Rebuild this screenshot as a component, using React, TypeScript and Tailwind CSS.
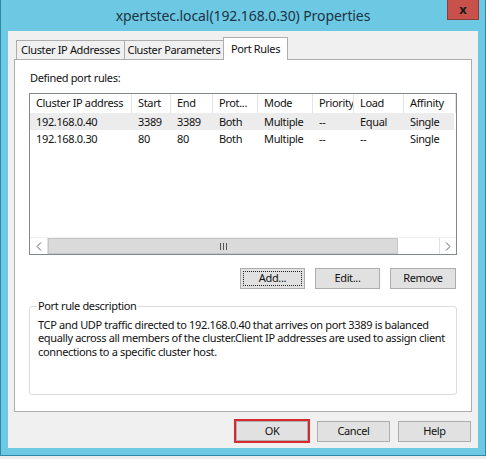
import React from "react";

// Column layout of the port rules list (widths in px)
const columns = [
  { label: "Cluster IP address", width: 102 },
  { label: "Start", width: 39 },
  { label: "End", width: 42 },
  { label: "Prot...", width: 45 },
  { label: "Mode", width: 55 },
  { label: "Priority", width: 41 },
  { label: "Load", width: 50 },
  { label: "Affinity", width: 52 },
];

const rules = [
  ["192.168.0.40", "3389", "3389", "Both", "Multiple", "--", "Equal", "Single"],
  ["192.168.0.30", "80", "80", "Both", "Multiple", "--", "--", "Single"],
];

const font = "font-['Noto_Sans',_'Segoe_UI',_sans-serif]";
const txt = "text-[11px] tracking-[-0.35px] text-[#111]";
const btnClass = `h-[21px] border border-[#adadad] bg-[#e1e1e1] ${txt} flex items-center justify-center`;

function Tab({ label, width, active }: { label: string; width: string; active?: boolean }) {
  if (active) {
    return (
      <div className={`relative z-10 -mb-px h-[23px] ${width} pt-[3px] text-center bg-white border border-b-0 border-[#adadad] ${txt}`}>
        {label}
      </div>
    );
  }
  return (
    <div className={`h-[19px] ${width} text-center bg-[#f0f0f0] border border-b-0 border-[#adadad] -mr-px leading-[18px] whitespace-nowrap ${txt}`}>
      {label}
    </div>
  );
}

function PortList() {
  return (
    <div className="ml-[14px] w-[428px] h-[162px] border border-[#828790] bg-white flex flex-col">
      {/* header */}
      <div className="flex h-[19px] shrink-0">
        {columns.map((c) => (
          <div
            key={c.label}
            style={{ width: c.width }}
            className={`shrink-0 border-r border-[#e5e5e5] pl-[6px] leading-[18px] whitespace-nowrap overflow-hidden ${txt}`}
          >
            {c.label}
          </div>
        ))}
      </div>
      {/* rows */}
      {rules.map((r, i) => (
        <div
          key={i}
          className={`flex h-[17px] w-[424px] shrink-0 ${i === 0 ? "bg-[#ececec]" : ""}`}
        >
          {r.map((cell, j) => (
            <div
              key={j}
              style={{ width: columns[j].width }}
              className={`shrink-0 pl-[6px] leading-[17px] whitespace-nowrap ${txt}`}
            >
              {cell}
            </div>
          ))}
        </div>
      ))}
      <div className="flex-1" />
      {/* horizontal scrollbar */}
      <div className="flex h-[17px] shrink-0 bg-white border-t border-[#f0f0f0]">
        <div className="w-[18px] flex items-center justify-center border-r border-[#e0e0e0]">
          <svg width="6" height="9" viewBox="0 0 6 9">
            <path d="M5 0.5 L1 4.5 L5 8.5" fill="none" stroke="#606060" strokeWidth="1" />
          </svg>
        </div>
        <div className="w-[350px] bg-[#dadada] border border-[#c6c6c6] flex items-center justify-center">
          <svg width="7" height="7" viewBox="0 0 7 7">
            <path d="M0.5 0 V7 M3.5 0 V7 M6.5 0 V7" stroke="#555" strokeWidth="1" />
          </svg>
        </div>
        <div className="flex-1" />
        <div className="w-[17px] flex items-center justify-center border-l border-[#e0e0e0]">
          <svg width="6" height="9" viewBox="0 0 6 9">
            <path d="M1 0.5 L5 4.5 L1 8.5" fill="none" stroke="#606060" strokeWidth="1" />
          </svg>
        </div>
      </div>
    </div>
  );
}

export default function App() {
  return (
    <div className={`w-[486px] h-[459px] bg-[#ededed] ${font}`}>
      <div className="h-[456px] bg-[#6cc8e3] border-x border-b border-[#2f88aa] flex flex-col">
        {/* Title bar */}
        <div className="relative h-[31px] shrink-0 flex items-center justify-center">
          <span className="text-[14px] tracking-[-0.1px] text-[#1d3444]">
            xpertstec.local(192.168.0.30) Properties
          </span>
          <div className="absolute top-0 right-[6px] w-[32px] h-[20px] bg-[#c8524b] border border-t-0 border-[#8e3a35] flex items-center justify-center">
            <span className="text-[13px] font-bold text-[#1a1a1a] leading-none">x</span>
          </div>
        </div>

        {/* Client area */}
        <div className="mx-[7px] h-[417px] bg-[#f0f0f0] flex flex-col">
          {/* tabs */}
          <div className="h-[28px] pl-[8px] flex items-end">
            <Tab label="Cluster IP Addresses" width="w-[109px]" />
            <Tab label="Cluster Parameters" width="w-[100px]" />
            <Tab label="Port Rules" width="w-[65px]" active />
          </div>

          {/* tab panel */}
          <div className="ml-[6px] w-[458px] h-[353px] bg-white border border-[#adadad] flex flex-col">
            <div className={`pl-[15px] pt-[10px] h-[33px] ${txt}`}>Defined port rules:</div>
            <PortList />

            <div className="mt-[13px] flex justify-end gap-[10px] pr-[15px]">
              <div className={`${btnClass} w-[65px] border-[#3c7fb1] p-[2px]`}>
                <div className="w-full h-full border border-dotted border-[#222] flex items-center justify-center">
                  Add...
                </div>
              </div>
              <div className={`${btnClass} w-[65px]`}>Edit...</div>
              <div className={`${btnClass} w-[66px]`}>Remove</div>
            </div>

            <fieldset className="mt-[9px] ml-[14px] w-[428px] h-[97px] border border-[#dcdcdc] rounded-[3px] px-[8px] pt-[3px]">
              <legend className={`px-[1px] -ml-[1px] ${txt}`}>Port rule description</legend>
              <p className={`leading-[13.5px] ${txt}`}>
                TCP and UDP traffic directed to 192.168.0.40 that arrives on port 3389 is balanced
                <br />
                equally across all members of the cluster.Client IP addresses are used to assign client
                <br />
                connections to a specific cluster host.
              </p>
            </fieldset>
          </div>

          {/* dialog buttons */}
          <div className="mt-[7px] flex justify-end items-center pr-[7px]">
            <div className="w-[76px] h-[24px] border-2 border-[#d42a30] mr-[7px]">
              <div className={`w-full h-full bg-[#e1e1e1] border border-[#adadad] flex items-center justify-center ${txt}`}>
                OK
              </div>
            </div>
            <div className={`${btnClass} w-[73px] mr-[8px]`}>Cancel</div>
            <div className={`${btnClass} w-[73px]`}>Help</div>
          </div>
        </div>
      </div>
    </div>
  );
}
